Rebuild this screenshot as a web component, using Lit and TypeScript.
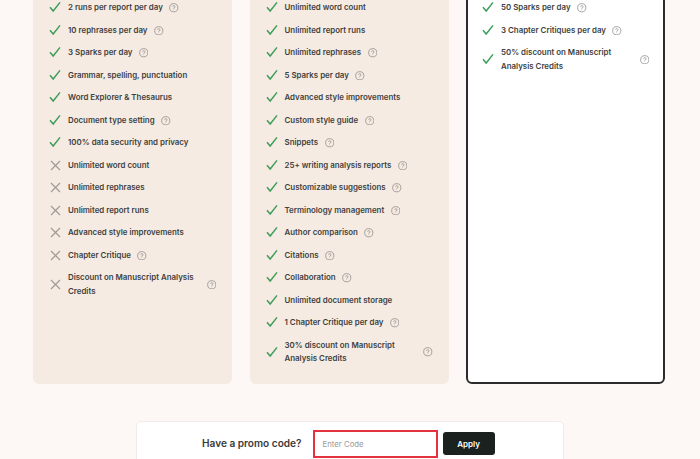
import { LitElement, html, css, svg } from "lit";
import { customElement } from "lit/decorators.js";

type Row = [string, boolean, boolean];
const c1: Row[] = [
  ["2 runs per report per day", true, true],
  ["10 rephrases per day", true, true],
  ["3 Sparks per day", true, true],
  ["Grammar, spelling, punctuation", true, false],
  ["Word Explorer & Thesaurus", true, false],
  ["Document type setting", true, true],
  ["100% data security and privacy", true, false],
  ["Unlimited word count", false, false],
  ["Unlimited rephrases", false, false],
  ["Unlimited report runs", false, false],
  ["Advanced style improvements", false, false],
  ["Chapter Critique", false, true],
  ["Discount on Manuscript Analysis Credits", false, true],
];
const c2: Row[] = [
  ["Unlimited word count", true, false],
  ["Unlimited report runs", true, false],
  ["Unlimited rephrases", true, true],
  ["5 Sparks per day", true, true],
  ["Advanced style improvements", true, false],
  ["Custom style guide", true, true],
  ["Snippets", true, true],
  ["25+ writing analysis reports", true, true],
  ["Customizable suggestions", true, true],
  ["Terminology management", true, true],
  ["Author comparison", true, true],
  ["Citations", true, true],
  ["Collaboration", true, true],
  ["Unlimited document storage", true, false],
  ["1 Chapter Critique per day", true, true],
  ["30% discount on Manuscript Analysis Credits", true, true],
];
const c3: Row[] = [
  ["50 Sparks per day", true, true],
  ["3 Chapter Critiques per day", true, true],
  ["50% discount on Manuscript Analysis Credits", true, true],
];

const check = svg`<path d="M1 6.2 L4.2 10 L11 1.4" fill="none" stroke="#3f9d5b" stroke-width="1.5"/>`;
const cross = svg`<path d="M2 2 L11 11 M11 2 L2 11" fill="none" stroke="#a09a96" stroke-width="1.2"/>`;

@customElement("app-root")
export class AppRoot extends LitElement {
  static styles = css`
    :host { display: block; height: 459px; overflow: hidden; background: #fdf8f5; font-family: Inter, "Liberation Sans", sans-serif; }
    .plans { display: grid; grid-template-columns: repeat(3, 199px); column-gap: 17.5px; margin: -19px 0 0 33px; }
    .card { background: #f6ebe3; border-radius: 6px; padding: 20px 16px; display: flex; flex-direction: column; gap: 9px; height: 403px; box-sizing: border-box; }
    .card.pro { background: #fff; border: 2px solid #2b2b2b; padding: 18px 14px; }
    .row { display: flex; align-items: center; font-size: 7.9px; font-weight: 600; line-height: 13.5px; color: #403f3e; }
    .mark { width: 13px; height: 13px; flex: none; margin-right: 6px; }
    .txt { flex: 0 1 auto; }
    .help { width: 9.5px; height: 9.5px; flex: none; margin-left: 6.5px; }
    .promo { width: 428px; height: 60px; box-sizing: border-box; margin: 37px 0 0 135.5px; background: #fff; border: 1px solid #f1ece8; border-radius: 5px; display: flex; align-items: flex-start; padding: 8px 0 0 65.5px; }
    .label { font-size: 10.1px; font-weight: 600; color: #3a3a3a; line-height: 27px; margin-right: 11px; white-space: nowrap; }
    .input { width: 125px; height: 28px; box-sizing: border-box; border: 2px solid #e5323f; padding-left: 8px; font-size: 7.8px; line-height: 24px; color: #9a9a9a; }
    .btn { margin: 2px 0 0 5px; width: 52px; height: 23px; border-radius: 3px; background: #1a211e; color: #fff; font-size: 8px; font-weight: 600; display: flex; align-items: center; justify-content: center; }
  `;

  private row(r: Row) {
    const [t, ok, help] = r;
    return html`<div class="row">
      <svg class="mark" viewBox="0 0 13 13">${ok ? check : cross}</svg>
      <span class="txt">${t}</span>
      ${help
        ? html`<svg class="help" viewBox="0 0 10 10"><circle cx="5" cy="5" r="4.3" fill="none" stroke="#8d8a88" stroke-width=".8"/><path d="M3.8 4 A1.25 1.25 0 1 1 5 5.3 V5.9" fill="none" stroke="#8d8a88" stroke-width=".7"/><circle cx="5" cy="7.2" r=".4" fill="#8d8a88"/></svg>`
        : ""}
    </div>`;
  }

  render() {
    return html`
      <div class="plans">
        <div class="card">${c1.map((r) => this.row(r))}</div>
        <div class="card">${c2.map((r) => this.row(r))}</div>
        <div class="card pro">${c3.map((r) => this.row(r))}</div>
      </div>
      <div class="promo">
        <span class="label">Have a promo code?</span>
        <div class="input">Enter Code</div>
        <div class="btn">Apply</div>
      </div>
    `;
  }
}
